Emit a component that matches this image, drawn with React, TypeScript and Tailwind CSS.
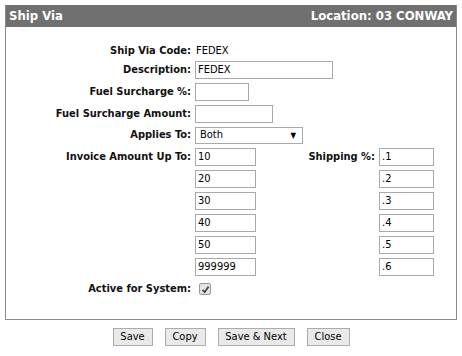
import React from 'react';

const font = "font-['DejaVu_Sans_Condensed','Liberation_Sans',sans-serif]";

function Field({ value, width }: { value: string; width: string }) {
  return (
    <div className={`h-[18px] ${width} border border-[#a9a9a9] bg-white px-[2px] text-[11px] leading-[16px] text-black`}>
      {value}
    </div>
  );
}

const tiers = [
  { upTo: '10', pct: '.1' },
  { upTo: '20', pct: '.2' },
  { upTo: '30', pct: '.3' },
  { upTo: '40', pct: '.4' },
  { upTo: '50', pct: '.5' },
  { upTo: '999999', pct: '.6' },
];

export default function App() {
  const label = 'w-[189px] shrink-0 pr-[4px] text-right text-[11px] font-bold text-[#111]';

  return (
    <div className={`w-[462px] h-[356px] bg-white ${font}`}>
      <div className="mx-[5px] pt-[5px]">
        <div className="border border-[#8a8a8a] border-t-0">
          {/* header */}
          <div className="flex h-[22px] items-center justify-between bg-[#707070] px-[3px] text-[13px] font-bold text-white">
            <span>Ship Via</span>
            <span>Location: 03 CONWAY</span>
          </div>

          {/* form body */}
          <div className="flex h-[292px] flex-col pt-[16px]">
            <div className="flex h-[16px] items-center">
              <div className={label}>Ship Via Code:</div>
              <div className="text-[11px] text-black pl-[1px]">FEDEX</div>
            </div>
            <div className="mt-[2px] flex items-center">
              <div className={label}>Description:</div>
              <Field value="FEDEX" width="w-[138px]" />
            </div>
            <div className="mt-[4px] flex items-center">
              <div className={label}>Fuel Surcharge %:</div>
              <Field value="" width="w-[54px]" />
            </div>
            <div className="mt-[4px] flex items-center">
              <div className={label}>Fuel Surcharge Amount:</div>
              <Field value="" width="w-[78px]" />
            </div>
            <div className="mt-[4px] flex items-center">
              <div className={label}>Applies To:</div>
              <div className="flex h-[17px] w-[108px] items-center justify-between border border-[#a9a9a9] bg-white pl-[4px] pr-[6px] text-[11px] text-black">
                <span>Both</span>
                <span className="text-[8px]">▼</span>
              </div>
            </div>

            <div className="mt-[4px] flex flex-col gap-[4px]">
              {tiers.map((t, i) => (
                <div key={t.upTo} className="flex items-center">
                  <div className={label}>{i === 0 ? 'Invoice Amount Up To:' : ''}</div>
                  <Field value={t.upTo} width="w-[61px]" />
                  <div className="w-[123px] pr-[4px] text-right text-[11px] font-bold text-[#111]">
                    {i === 0 ? 'Shipping %:' : ''}
                  </div>
                  <Field value={t.pct} width="w-[55px]" />
                </div>
              ))}
            </div>

            <div className="mt-[5px] flex items-center">
              <div className={label}>Active for System:</div>
              <div className="ml-[4px] flex h-[12px] w-[12px] items-center justify-center rounded-[2px] border border-[#9a9a9a] bg-[#e4e4e4]">
                <svg width="9" height="9" viewBox="0 0 9 9">
                  <path d="M1.5 4.8 L3.6 7 L7.6 1.6" fill="none" stroke="#4a4a4a" strokeWidth="1.8" />
                </svg>
              </div>
            </div>
          </div>
        </div>
      </div>

      {/* buttons */}
      <div className="mt-[8px] flex justify-center gap-[12px] text-[11px] text-black">
        <button className="h-[18px] w-[40px] border border-[#acacac] bg-[#e9e9e9]">Save</button>
        <button className="h-[18px] w-[41px] border border-[#acacac] bg-[#e9e9e9]">Copy</button>
        <button className="h-[18px] w-[77px] border border-[#acacac] bg-[#e9e9e9]">Save &amp; Next</button>
        <button className="h-[18px] w-[43px] border border-[#acacac] bg-[#e9e9e9]">Close</button>
      </div>
    </div>
  );
}
